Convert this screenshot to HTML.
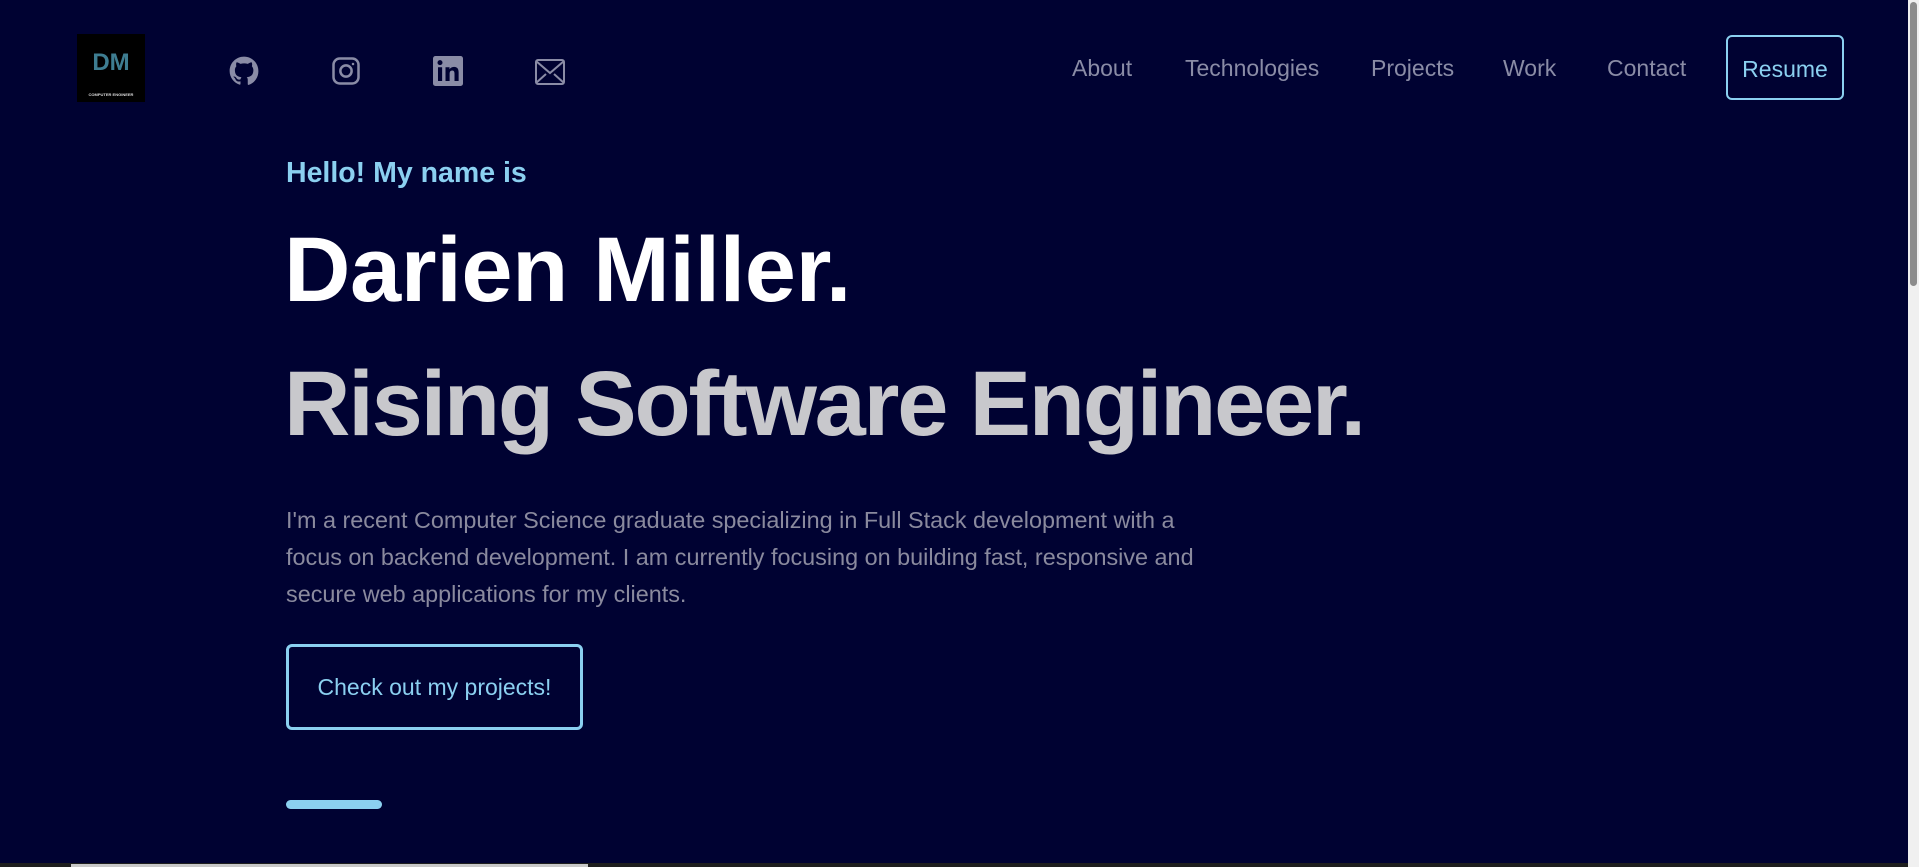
<!DOCTYPE html>
<html><head><meta charset="utf-8"><style>
*{margin:0;padding:0;box-sizing:border-box}
html,body{width:1919px;height:867px;overflow:hidden;background:#000232;font-family:"Liberation Sans",sans-serif}
.abs{position:absolute}
.logo{left:77px;top:34px;width:68px;height:68px;background:#000;color:#3e7d91;font-weight:bold;font-size:24px;text-align:center}
.logo .t{position:absolute;left:0;right:0;top:15px}
.logo .s{position:absolute;left:0;right:0;top:58px;font-size:4px;color:#ddd}
.nav{top:55px;font-size:23px;color:#8a8ca6}
.resume{left:1726px;top:35px;width:118px;height:65px;border:2px solid #8bd0f0;border-radius:6px;color:#8bd0f0;font-size:23px;display:flex;align-items:center;justify-content:center;padding-top:3px}
.hello{left:286px;top:157px;font-size:28.5px;font-weight:bold;color:#8bd0f0}
.h1{left:284px;top:218px;font-size:92px;font-weight:bold;color:#fff;letter-spacing:-0.4px}
.h2{left:284px;top:352px;font-size:92px;font-weight:bold;color:#c8c8cc;letter-spacing:-2.2px}
.p{left:286px;top:502px;width:950px;font-size:23.4px;line-height:37px;color:#8a8a9e}
.btn{left:286px;top:644px;width:297px;height:86px;border:3px solid #8bd0f0;border-radius:6px;color:#8bd0f0;font-size:23px;display:flex;align-items:center;justify-content:center}
.bar{left:286px;top:800px;width:96px;height:9px;border-radius:5px;background:#8bd0f0}
</style></head><body>
<div class="abs logo"><div class="t">DM</div><div class="s">COMPUTER ENGINEER</div></div>
<svg class="abs" style="left:229px;top:56px" width="30" height="30" viewBox="0 0 24 24" fill="#8a8ca6"><path d="M12 .5C5.6.5.5 5.6.5 12c0 5.1 3.3 9.4 7.9 10.9.6.1.8-.2.8-.6v-2c-3.2.7-3.900-1.5-3.9-1.5-.5-1.3-1.3-1.7-1.3-1.7-1-.7.1-.7.1-.7 1.2.1 1.8 1.2 1.8 1.2 1 1.8 2.7 1.3 3.4 1 .1-.8.4-1.3.7-1.6-2.6-.3-5.3-1.3-5.3-5.7 0-1.3.5-2.3 1.2-3.1-.1-.3-.5-1.5.1-3.1 0 0 1-.3 3.2 1.2a11 11 0 0 1 5.8 0c2.2-1.5 3.2-1.2 3.2-1.2.6 1.6.2 2.8.1 3.1.7.8 1.2 1.8 1.2 3.1 0 4.4-2.7 5.4-5.3 5.7.4.4.8 1.1.8 2.2v3.3c0 .3.2.7.8.6A11.5 11.5 0 0 0 23.5 12C23.5 5.6 18.4.5 12 .5z"/></svg>
<svg class="abs" style="left:331px;top:56px" width="30" height="30" viewBox="0 0 24 24" fill="none" stroke="#8a8ca6" stroke-width="2"><rect x="2" y="2" width="20" height="20" rx="5"/><circle cx="12" cy="12" r="4.5"/><circle cx="17.6" cy="6.4" r="1" fill="#8a8ca6" stroke="none"/></svg>
<svg class="abs" style="left:433px;top:56px" width="30" height="30" viewBox="0 0 24 24"><rect x="0" y="0" width="24" height="24" rx="2" fill="#8a8ca6"/><rect x="4" y="9" width="3.3" height="11" fill="#000232"/><circle cx="5.6" cy="5.3" r="2" fill="#000232"/><path d="M10 9h3.2v1.6c.6-1 1.8-1.9 3.6-1.9 3 0 3.7 2 3.7 4.6V20h-3.3v-5.8c0-1.4-.3-2.6-1.8-2.6s-2.1 1.1-2.1 2.6V20H10z" fill="#000232"/></svg>
<svg class="abs" style="left:535px;top:59px" width="30" height="26" viewBox="0 0 30 26" fill="none" stroke="#8a8ca6" stroke-width="2"><rect x="1" y="1" width="28" height="24" rx="2"/><path d="M1 2l14 12L29 2M1 24l10-9M29 24l-10-9"/></svg>
<div class="abs nav" style="left:1072px">About</div>
<div class="abs nav" style="left:1185px">Technologies</div>
<div class="abs nav" style="left:1371px">Projects</div>
<div class="abs nav" style="left:1503px">Work</div>
<div class="abs nav" style="left:1607px">Contact</div>
<div class="abs resume">Resume</div>
<div class="abs hello">Hello! My name is</div>
<div class="abs h1">Darien Miller.</div>
<div class="abs h2">Rising Software Engineer.</div>
<div class="abs p">I'm a recent Computer Science graduate specializing in Full Stack development with a focus on backend development. I am currently focusing on building fast, responsive and secure web applications for my clients.</div>
<div class="abs btn">Check out my projects!</div>
<div class="abs bar"></div>
<div class="abs" style="left:1908px;top:0;width:11px;height:867px;background:#f0f0f0"></div>
<div class="abs" style="left:1910px;top:2px;width:7px;height:284px;background:#8c8c8c;border-radius:4px"></div>
<div class="abs" style="left:0;top:863px;width:1908px;height:4px;background:#1e1e1e"></div>
<div class="abs" style="left:71px;top:864px;width:517px;height:3px;background:#c8c8c8"></div>
</body></html>
